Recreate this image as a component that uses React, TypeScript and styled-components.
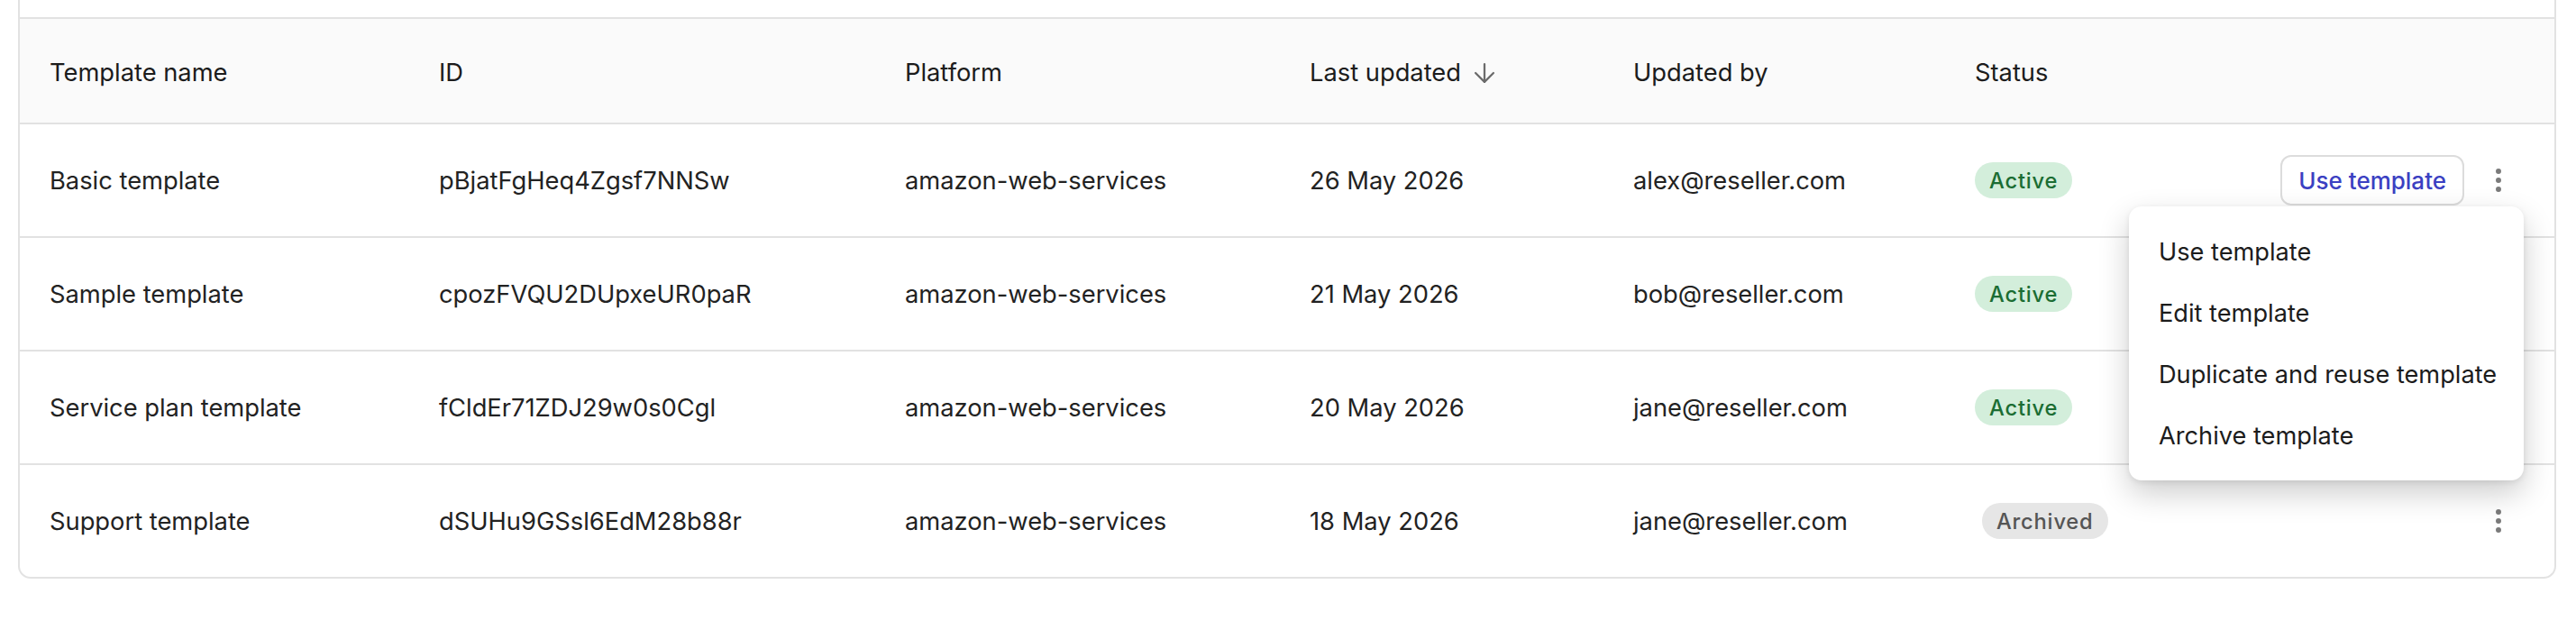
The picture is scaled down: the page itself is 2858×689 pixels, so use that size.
import styled, { createGlobalStyle } from "styled-components";
import { ArrowDown, EllipsisVertical } from "lucide-react";

const GlobalStyle = createGlobalStyle`
  html, body {
    margin: 0;
    padding: 0;
    background: #ffffff;
  }
  body {
    font-family: Inter, "Noto Sans", sans-serif;
    color: #1f1f1f;
    -webkit-font-smoothing: antialiased;
  }
`;

const Page = styled.div`
  padding: 0 22px 0 20px;
  width: 2858px;
  box-sizing: border-box;
`;

const Card = styled.div`
  position: relative;
  border: 2px solid #e2e2e2;
  border-top: none;
  border-radius: 0 0 14px 14px;
  padding-top: 19px;
  background: #fff;
`;

const Table = styled.div`
  display: grid;
  grid-template-columns: 432px 517px 449px 359px 379px 1fr;
`;

const HeadRow = styled.div`
  display: contents;
`;

const HeadCell = styled.div`
  display: flex;
  align-items: center;
  gap: 9px;
  padding: 4px 0 0 33px;
  box-sizing: border-box;
  height: 119px;
  background: #fafafa;
  border-top: 2px solid #e2e2e2;
  border-bottom: 2px solid #e2e2e2;
  font-size: 27.3px;
  color: #1c1c1c;
`;

const Row = styled.div`
  display: contents;
`;

const Cell = styled.div<{ $last?: boolean }>`
  display: flex;
  align-items: center;
  height: ${(p) => (p.$last ? "124px" : "126px")};
  padding-left: 33px;
  box-sizing: border-box;
  border-bottom: ${(p) => (p.$last ? "none" : "2px solid #e2e2e2")};
  font-size: 27.3px;
  color: #222;
`;

const StatusCell = styled(Cell)`
  justify-content: space-between;
  padding-right: 40px;
`;

const Badge = styled.span<{ $tone: "active" | "archived" }>`
  display: inline-flex;
  align-items: center;
  height: 40px;
  padding: 0 16px;
  margin-left: ${(p) => (p.$tone === "archived" ? "8px" : "0")};
  border-radius: 20px;
  font-size: 23.7px;
  font-weight: 500;
  letter-spacing: 0.8px;
  background: ${(p) => (p.$tone === "active" ? "#d3eedb" : "#e6e6e6")};
  color: ${(p) => (p.$tone === "active" ? "#1b6d33" : "#555555")};
`;

const Actions = styled.div`
  display: flex;
  align-items: center;
  gap: 16px;
`;

const UseButton = styled.button`
  height: 56px;
  padding: 0 18px;
  border: 2px solid #dcdcdc;
  border-radius: 12px;
  background: #fff;
  font-family: Inter, sans-serif;
  font-size: 26px;
  font-weight: 500;
  color: #3b40c2;
  cursor: pointer;
`;

const KebabWrap = styled.div`
  position: relative;
`;

const Kebab = styled.button`
  display: flex;
  align-items: center;
  justify-content: center;
  width: 44px;
  height: 44px;
  padding: 0;
  border: none;
  background: transparent;
  color: #7a7a7a;
  cursor: pointer;
`;

const Menu = styled.ul`
  position: absolute;
  top: calc(100% + 7px);
  right: -6px;
  z-index: 5;
  width: 438px;
  margin: 0;
  padding: 16px 0;
  list-style: none;
  background: #fff;
  border-radius: 14px;
  box-shadow: 0 14px 34px rgba(0, 0, 0, 0.2), 0 2px 6px rgba(0, 0, 0, 0.08);
`;

const MenuItem = styled.li`
  display: flex;
  align-items: center;
  height: 68px;
  padding-left: 33px;
  font-size: 27.2px;
  color: #1c1c1c;
  white-space: nowrap;
`;

type Template = {
  name: string;
  id: string;
  date: string;
  by: string;
  status: "active" | "archived";
};

const templates: Template[] = [
  { name: "Basic template", id: "pBjatFgHeq4Zgsf7NNSw", date: "26 May 2026", by: "alex@reseller.com", status: "active" },
  { name: "Sample template", id: "cpozFVQU2DUpxeUR0paR", date: "21 May 2026", by: "bob@reseller.com", status: "active" },
  { name: "Service plan template", id: "fCldEr71ZDJ29w0s0Cgl", date: "20 May 2026", by: "jane@reseller.com", status: "active" },
  { name: "Support template", id: "dSUHu9GSsl6EdM28b88r", date: "18 May 2026", by: "jane@reseller.com", status: "archived" },
];

const menuItems = ["Use template", "Edit template", "Duplicate and reuse template", "Archive template"];

function App() {
  return (
    <Page>
      <GlobalStyle />
      <Card>
        <Table>
          <HeadRow>
            <HeadCell>Template name</HeadCell>
            <HeadCell>ID</HeadCell>
            <HeadCell>Platform</HeadCell>
            <HeadCell>
              Last updated
              <ArrowDown size={34} strokeWidth={1.6} color="#6b6b6b" />
            </HeadCell>
            <HeadCell>Updated by</HeadCell>
            <HeadCell>Status</HeadCell>
          </HeadRow>
          {templates.map((t, i) => {
            const last = i === templates.length - 1;
            return (
              <Row key={t.id}>
                <Cell $last={last}>{t.name}</Cell>
                <Cell $last={last}>{t.id}</Cell>
                <Cell $last={last}>amazon-web-services</Cell>
                <Cell $last={last}>{t.date}</Cell>
                <Cell $last={last}>{t.by}</Cell>
                <StatusCell $last={last}>
                  <Badge $tone={t.status}>{t.status === "active" ? "Active" : "Archived"}</Badge>
                  <Actions>
                    {i === 0 ? <UseButton>Use template</UseButton> : null}
                    <KebabWrap>
                      <Kebab aria-label="More actions">
                        <EllipsisVertical size={34} strokeWidth={2.2} />
                      </Kebab>
                      {i === 0 ? (
                        <Menu>
                          {menuItems.map((m) => (
                            <MenuItem key={m}>{m}</MenuItem>
                          ))}
                        </Menu>
                      ) : null}
                    </KebabWrap>
                  </Actions>
                </StatusCell>
              </Row>
            );
          })}
        </Table>
      </Card>
    </Page>
  );
}

export default App;
